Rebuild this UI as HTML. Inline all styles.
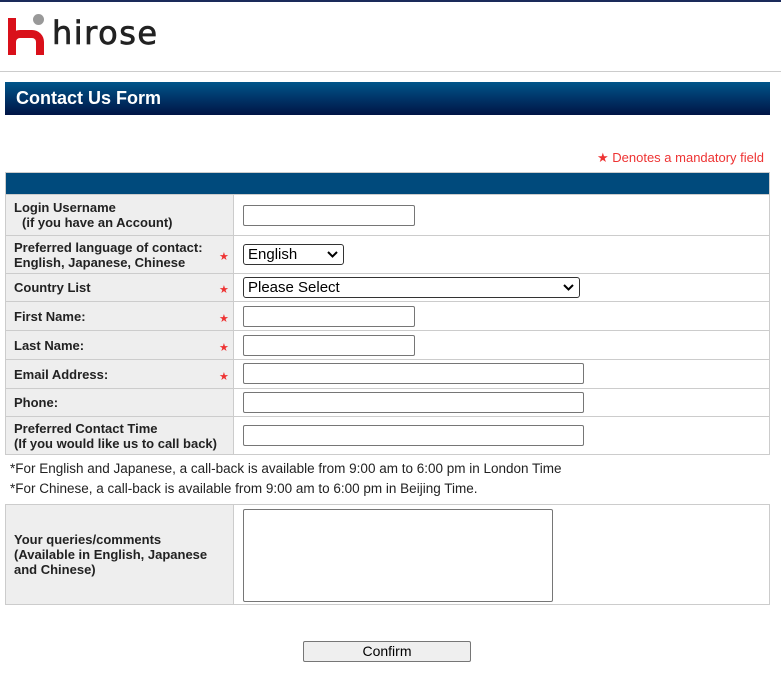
<!DOCTYPE html>
<html><head><style>
body{margin:0;width:781px;height:685px;position:relative;font-family:"Liberation Sans",Arial,sans-serif;background:#fff;overflow:hidden}
.a{position:absolute}
.lab{position:absolute;left:5px;width:229px;background:#eee;border:1px solid #ccc;box-sizing:border-box;font-weight:bold;font-size:13px;color:#222;padding-left:8px;display:flex;flex-direction:column;justify-content:center;line-height:15px}
.val{position:absolute;left:234px;width:536px;border:1px solid #ccc;border-left:none;box-sizing:border-box}
.st{position:absolute;left:219px;color:#e33;font-size:11px}
.in{position:absolute;left:243px;height:19px;border:1px solid #767676;border-radius:2px;box-sizing:border-box;background:#fff}
.sel{position:absolute;left:243px;height:21px;border:1px solid #333;border-radius:3px;box-sizing:border-box;font-size:15px;padding-left:4px;line-height:19px;color:#000}
.sel svg{position:absolute;right:5px;top:6px}
</style></head><body>
<div class="a" style="left:0;top:0;width:781px;height:2px;background:#1a2a5a"></div>
<div class="a" style="left:0;top:71px;width:781px;height:1px;background:#ccc"></div>
<div class="a" style="left:8px;top:18px;width:8px;height:37px;background:#d9101a"></div>
<div class="a" style="left:8px;top:30px;width:36px;height:25px;"><div style="position:absolute;left:0;top:0;width:36px;height:25px;border:8px solid #d9101a;border-bottom:none;border-radius:12px 12px 0 0;box-sizing:border-box"></div></div>
<div class="a" style="left:33px;top:14px;width:11px;height:11px;border-radius:50%;background:#999"></div>
<div class="a" style="left:52px;top:14px;font-size:32px;letter-spacing:1.5px;color:#222;font-family:'DejaVu Sans',sans-serif;-webkit-text-stroke:0.7px #222">hirose</div>
<div class="a" style="left:5px;top:82px;width:765px;height:33px;background:linear-gradient(#00558a,#001445)"></div>
<div class="a" style="left:16px;top:88px;font-size:18px;font-weight:bold;color:#fff">Contact Us Form</div>
<div class="a" style="left:597px;top:150px;font-size:13px;color:#e33">★ Denotes a mandatory field</div>
<div class="a" style="left:5px;top:172px;width:765px;height:23px;background:#004a7c;border:1px solid #ccc;box-sizing:border-box"></div>

<div class="lab" style="top:194px;height:42px">Login Username<span style="padding-left:8px">(if you have an Account)</span></div><div class="val" style="top:194px;height:42px"></div>
<div class="in" style="top:205px;width:172px;height:21px"></div>

<div class="lab" style="top:235px;height:39px">Preferred language of contact:<span>English, Japanese, Chinese</span></div><div class="val" style="top:235px;height:39px"></div>
<div class="st" style="top:250px">★</div>
<div class="sel" style="top:244px;width:101px">English<svg width="11" height="8"><path d="M1 1l4.5 4.5L10 1" stroke="#000" stroke-width="2" fill="none"/></svg></div>

<div class="lab" style="top:273px;height:29px;justify-content:flex-start;padding-top:6px">Country List</div><div class="val" style="top:273px;height:29px"></div>
<div class="st" style="top:283px">★</div>
<div class="sel" style="top:277px;width:337px">Please Select<svg width="11" height="8"><path d="M1 1l4.5 4.5L10 1" stroke="#000" stroke-width="2" fill="none"/></svg></div>

<div class="lab" style="top:301px;height:30px">First Name:</div><div class="val" style="top:301px;height:30px"></div>
<div class="st" style="top:312px">★</div><div class="in" style="top:306px;width:172px;height:21px"></div>

<div class="lab" style="top:330px;height:30px">Last Name:</div><div class="val" style="top:330px;height:30px"></div>
<div class="st" style="top:341px">★</div><div class="in" style="top:335px;width:172px;height:21px"></div>

<div class="lab" style="top:359px;height:30px">Email Address:</div><div class="val" style="top:359px;height:30px"></div>
<div class="st" style="top:370px">★</div><div class="in" style="top:363px;width:341px;height:21px"></div>

<div class="lab" style="top:388px;height:29px">Phone:</div><div class="val" style="top:388px;height:29px"></div>
<div class="in" style="top:392px;width:341px;height:21px"></div>

<div class="lab" style="top:416px;height:39px">Preferred Contact Time<span>(If you would like us to call back)</span></div><div class="val" style="top:416px;height:39px"></div>
<div class="in" style="top:425px;width:341px;height:21px"></div>

<div class="a" style="left:10px;top:459px;font-size:13.5px;color:#222;line-height:20px">*For English and Japanese, a call-back is available from 9:00 am to 6:00 pm in London Time<br>*For Chinese, a call-back is available from 9:00 am to 6:00 pm in Beijing Time.</div>

<div class="lab" style="top:504px;height:101px">Your queries/comments<span>(Available in English, Japanese</span><span>and Chinese)</span></div><div class="val" style="top:504px;height:101px"></div>
<div class="in" style="top:509px;width:310px;height:93px"></div>

<div class="a" style="left:303px;top:641px;width:168px;height:21px;border:1px solid #767676;border-radius:2px;box-sizing:border-box;background:#efefef;text-align:center;font-size:14px;line-height:19px">Confirm</div>
</body></html>
